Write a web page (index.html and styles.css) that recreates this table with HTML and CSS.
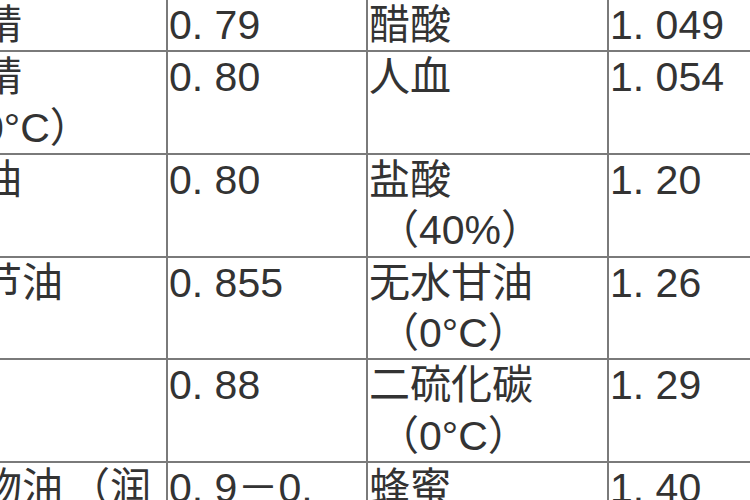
FILE: index.html
```html
<!DOCTYPE html>
<html lang="ja">
<head>
<meta charset="utf-8">
<link rel="stylesheet" href="styles.css">
</head>
<body>
<table class="density">
  <colgroup>
    <col class="c1"><col class="c2"><col class="c3"><col class="c4">
  </colgroup>
  <tr><td>酒精</td><td>0. 79</td><td>醋酸</td><td>1. 049</td></tr>
  <tr><td>木精<br>（0°C）</td><td>0. 80</td><td>人血</td><td>1. 054</td></tr>
  <tr><td>煤油</td><td>0. 80</td><td>盐酸<br><span class="note">（40%）</span></td><td>1. 20</td></tr>
  <tr><td>松节油</td><td>0. 855</td><td>无水甘油<br><span class="note">（0°C）</span></td><td>1. 26</td></tr>
  <tr><td>苯</td><td>0. 88</td><td>二硫化碳<br><span class="note">（0°C）</span></td><td>1. 29</td></tr>
  <tr><td>矿物油<span class="gap">（</span>润<br>滑油）</td><td>0. 9－0.<br>93</td><td>蜂蜜</td><td>1. 40</td></tr>
</table>
</body>
</html>
```
FILE: styles.css
```css
html, body {
  margin: 0;
  padding: 0;
  background: #ffffff;
  overflow: hidden;
}
body {
  width: 750px;
  height: 500px;
}
.density {
  border-collapse: collapse;
  table-layout: fixed;
  width: 871px;
  margin-left: -63px;
  margin-top: -2px;
  font-family: "Liberation Sans", "Noto Sans CJK JP", sans-serif;
  font-size: 41px;
  line-height: 50.35px;
  color: #333333;
}
.c1 { width: 229px; }
.c2 { width: 200px; }
.c3 { width: 241px; }
.c4 { width: 201px; }
.density td {
  border: 2px solid #7a7a7a;
  padding: 0 0 0 1px;
  vertical-align: top;
  white-space: nowrap;
  overflow: hidden;
}
.note {
  padding-left: 9px;
}
.gap {
  padding-left: 6px;
}
```
